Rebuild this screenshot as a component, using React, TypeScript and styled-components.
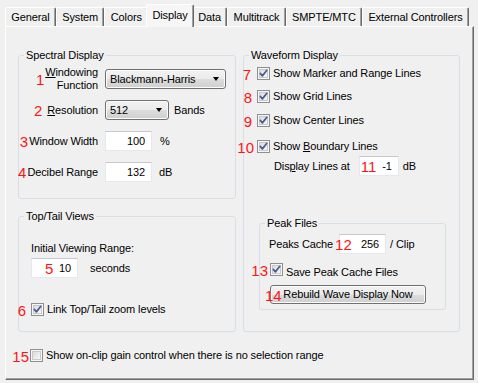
import React from 'react';
import styled, { createGlobalStyle } from 'styled-components';

const GlobalStyle = createGlobalStyle`
  html, body {
    margin: 0;
    padding: 0;
    background: #f0f0f0;
  }

  body {
    font-family: 'Liberation Sans', Arial, sans-serif;
    font-size: 11px;
    letter-spacing: -0.12px;
    color: #000;
  }
`;

const Window = styled.div`
  width: 478px;
  height: 383px;
  box-sizing: border-box;
  padding: 4px 4px 3px 5px;
  display: flex;
  flex-direction: column;
  background: #f0f0f0;
`;

const TabStrip = styled.div`
  display: flex;
  align-items: flex-end;
  height: 22px;
  position: relative;
  z-index: 1;
`;

const Tab = styled.div<{ $active?: boolean }>`
  position: relative;
  z-index: ${(p) => (p.$active ? 2 : 1)};
  box-sizing: border-box;
  height: ${(p) => (p.$active ? 23 : 19)}px;
  margin: ${(p) => (p.$active ? '0 -2px -1px' : '0')};
  padding: 0 5.3px ${(p) => (p.$active ? 2 : 0)}px;
  display: flex;
  align-items: center;
  white-space: nowrap;
  background: ${(p) => (p.$active ? '#f6f6f6' : '#f0f0f0')};
  border: 1px solid #fff;
  border-bottom: none;
  border-right-color: #696969;
  border-radius: 2px 2px 0 0;
  box-shadow: inset -1px 0 #a0a0a0;
`;

const Panel = styled.div`
  flex: 1;
  box-sizing: border-box;
  padding: 28px 13px 0 12px;
  border: 1px solid #fff;
  border-right-color: #696969;
  border-bottom-color: #696969;
  box-shadow: inset -1px -1px #a0a0a0;
  display: flex;
  flex-direction: column;
`;

const Columns = styled.div`
  display: flex;
  gap: 7px;
`;

const Column = styled.div<{ $w: number }>`
  width: ${(p) => p.$w}px;
  display: flex;
  flex-direction: column;
  gap: 17px;
`;

const Group = styled.div<{ $h: number }>`
  position: relative;
  box-sizing: border-box;
  height: ${(p) => p.$h}px;
  border: 1px solid #d5dfe5;
  border-radius: 3px;
`;

const GroupTitle = styled.span`
  position: absolute;
  top: -7px;
  left: 5px;
  padding: 0 2px;
  line-height: 13px;
  background: #f0f0f0;
`;

const markFont = `
  font-family: 'Liberation Sans', Arial, sans-serif;
  font-size: 15px;
  line-height: 15px;
  letter-spacing: 0;
  color: #ff1414;
  white-space: nowrap;
`;

// red call-out numbers drawn over the dialog
const Note = styled.span<{ $left?: number; $right?: number }>`
  ${markFont}
  position: absolute;
  top: 50%;
  transform: translateY(-50%);
  ${(p) => (p.$left !== undefined ? `left: ${p.$left}px;` : '')}
  ${(p) => (p.$right !== undefined ? `right: calc(100% + ${p.$right}px);` : '')}
  pointer-events: none;
`;

const Mark = styled.span<{ $gap: number }>`
  ${markFont}
  margin-right: ${(p) => p.$gap}px;
`;

const U = styled.span`
  text-decoration: underline;
`;

const FormGrid = styled.div`
  display: grid;
  grid-template-columns: 79px auto;
  grid-template-rows: repeat(4, 20px);
  column-gap: 7px;
  row-gap: 11px;
  padding-top: 13px;
  align-items: center;
`;

const LabelCell = styled.div`
  display: flex;
  justify-content: flex-end;
  align-items: center;
  white-space: nowrap;
`;

const TwoLine = styled.div`
  text-align: right;
  line-height: 13px;
`;

const ControlCell = styled.div<{ $gap?: number }>`
  display: flex;
  align-items: center;
  gap: ${(p) => p.$gap || 0}px;
`;

const Combo = styled.div<{ $w: number }>`
  box-sizing: border-box;
  width: ${(p) => p.$w}px;
  height: 20px;
  padding: 0 6px 0 4px;
  display: flex;
  align-items: center;
  justify-content: space-between;
  border: 1px solid #707070;
  border-radius: 3px;
  background: linear-gradient(#f2f2f2 0%, #ebebeb 50%, #dddddd 50%, #cfcfcf 100%);
  box-shadow: inset 0 0 0 1px #fcfcfc;
`;

const Arrow = styled.span`
  width: 0;
  height: 0;
  border-left: 3.5px solid transparent;
  border-right: 3.5px solid transparent;
  border-top: 4px solid #000;
`;

const FieldWrap = styled.span<{ $ml?: number }>`
  position: relative;
  display: inline-flex;
  margin-left: ${(p) => p.$ml || 0}px;
`;

const Field = styled.input<{ $w: number }>`
  box-sizing: border-box;
  width: ${(p) => p.$w}px;
  height: 20px;
  margin: 0;
  padding: 0 6px 0 2px;
  font: inherit;
  letter-spacing: inherit;
  color: #000;
  text-align: right;
  background: #fff;
  border: 1px solid #e3e9ef;
  border-top-color: #c5c9cf;
  outline: none;
`;

const Inset = styled.div<{ $top: number; $left: number }>`
  padding: ${(p) => p.$top}px 0 0 ${(p) => p.$left}px;
  display: flex;
  flex-direction: column;
  align-items: flex-start;
`;

const Line = styled.div<{ $mt?: number; $gap?: number }>`
  display: flex;
  align-items: center;
  gap: ${(p) => p.$gap || 0}px;
  margin-top: ${(p) => p.$mt || 0}px;
  line-height: 13px;
  white-space: nowrap;
`;

const LineLabel = styled.span<{ $ml?: number; $mr?: number }>`
  margin-left: ${(p) => p.$ml || 0}px;
  margin-right: ${(p) => p.$mr || 0}px;
`;

const BoxWrap = styled.span`
  position: relative;
  display: inline-flex;
`;

const CheckLabel = styled.span`
  margin-left: 3px;
  line-height: 13px;
`;

const PushButton = styled.div`
  position: relative;
  box-sizing: border-box;
  width: 156px;
  height: 19px;
  display: flex;
  align-items: center;
  justify-content: center;
  border: 1px solid #707070;
  border-radius: 3px;
  background: linear-gradient(#f2f2f2 0%, #ebebeb 50%, #dddddd 50%, #cfcfcf 100%);
  box-shadow: inset 0 0 0 1px #fcfcfc;
`;

const SubGroup = styled(Group)`
  margin: 47px 0 0 15px;
  width: 187px;
`;

const BottomRow = styled(Line)`
  margin: 17px 0 0 12px;
`;

const CheckBox = ({ checked }: { checked: boolean }) => (
  <svg width="13" height="13" viewBox="0 0 13 13">
    <defs>
      <linearGradient id="cbFill" x1="0" y1="0" x2="1" y2="1">
        <stop offset="0" stopColor="#d8d8d8" />
        <stop offset="1" stopColor="#fbfbfb" />
      </linearGradient>
    </defs>
    <rect x="0.5" y="0.5" width="12" height="12" fill="#f6f6f6" stroke="#8e8f8f" />
    <rect x="2.5" y="2.5" width="8" height="8" fill="url(#cbFill)" stroke="#c9c9c9" />
    {checked && (
      <path
        d="M3.3 6.4 L5.4 8.9 L9.8 3.3"
        fill="none"
        stroke="#4a5c94"
        strokeWidth="1.7"
        strokeLinecap="round"
        strokeLinejoin="round"
      />
    )}
  </svg>
);

const Check = ({
  n,
  gap,
  checked,
  children,
}: {
  n: string;
  gap: number;
  checked: boolean;
  children: React.ReactNode;
}) => (
  <>
    <BoxWrap>
      <Note $right={gap}>{n}</Note>
      <CheckBox checked={checked} />
    </BoxWrap>
    <CheckLabel>{children}</CheckLabel>
  </>
);

const tabs = [
  'General',
  'System',
  'Colors',
  'Display',
  'Data',
  'Multitrack',
  'SMPTE/MTC',
  'External Controllers',
];

export default function App() {
  return (
    <>
      <GlobalStyle />
      <Window>
        <TabStrip>
          {tabs.map((t) => (
            <Tab key={t} $active={t === 'Display'}>
              {t}
            </Tab>
          ))}
        </TabStrip>

        <Panel>
          <Columns>
            <Column $w={218}>
              <Group $h={144}>
                <GroupTitle>Spectral Display</GroupTitle>
                <FormGrid>
                  <LabelCell>
                    <Mark $gap={1}>1</Mark>
                    <TwoLine>
                      <U>W</U>indowing
                      <br />
                      Function
                    </TwoLine>
                  </LabelCell>
                  <ControlCell>
                    <Combo $w={121}>
                      Blackmann-Harris
                      <Arrow />
                    </Combo>
                  </ControlCell>

                  <LabelCell>
                    <Mark $gap={5}>2</Mark>
                    <span>
                      <U>R</U>esolution
                    </span>
                  </LabelCell>
                  <ControlCell $gap={5}>
                    <Combo $w={64}>
                      512
                      <Arrow />
                    </Combo>
                    Bands
                  </ControlCell>

                  <LabelCell>
                    <Mark $gap={1}>3</Mark>
                    <span>Window Width</span>
                  </LabelCell>
                  <ControlCell $gap={8}>
                    <Field $w={47} readOnly value="100" />%
                  </ControlCell>

                  <LabelCell>
                    <Mark $gap={1}>4</Mark>
                    <span>Decibel Range</span>
                  </LabelCell>
                  <ControlCell $gap={7}>
                    <Field $w={47} readOnly value="132" />
                    dB
                  </ControlCell>
                </FormGrid>
              </Group>

              <Group $h={116}>
                <GroupTitle>Top/Tail Views</GroupTitle>
                <Inset $top={25} $left={12}>
                  <Line>Initial Viewing Range:</Line>
                  <Line $mt={3} $gap={12}>
                    <FieldWrap>
                      <Field $w={47} readOnly value="10" />
                      <Note $left={14}>5</Note>
                    </FieldWrap>
                    seconds
                  </Line>
                  <Line $mt={25}>
                    <Check n="6" gap={5} checked>
                      Link Top/Tail zoom levels
                    </Check>
                  </Line>
                </Inset>
              </Group>
            </Column>

            <Column $w={217}>
              <Group $h={277}>
                <GroupTitle>Waveform Display</GroupTitle>
                <Inset $top={11} $left={13}>
                  <Line>
                    <Check n="7" gap={6} checked>
                      Show Marker and Range Lines
                    </Check>
                  </Line>
                  <Line $mt={10}>
                    <Check n="8" gap={5} checked>
                      Show Grid Lines
                    </Check>
                  </Line>
                  <Line $mt={11}>
                    <Check n="9" gap={5} checked>
                      Show Center Lines
                    </Check>
                  </Line>
                  <Line $mt={13}>
                    <Check n="10" gap={3} checked>
                      Show <U>B</U>oundary Lines
                    </Check>
                  </Line>
                  <Line $mt={3} $gap={4}>
                    <LineLabel $ml={17} $mr={5}>
                      Dis<U>p</U>lay Lines at
                    </LineLabel>
                    <FieldWrap>
                      <Field $w={40} readOnly value="-1" />
                      <Note $left={2}>11</Note>
                    </FieldWrap>
                    dB
                  </Line>
                </Inset>

                <SubGroup $h={87}>
                  <GroupTitle>Peak Files</GroupTitle>
                  <Inset $top={10} $left={9}>
                    <Line $gap={4}>
                      <span>Peaks Cache</span>
                      <FieldWrap $ml={2}>
                        <Field $w={47} readOnly value="256" />
                        <Note $left={-4}>12</Note>
                      </FieldWrap>
                      / Clip
                    </Line>
                    <Line $mt={9}>
                      <LineLabel $ml={1}>
                        <Check n="13" gap={2} checked>
                          Save Peak Cache Files
                        </Check>
                      </LineLabel>
                    </Line>
                    <Line $mt={6}>
                      <LineLabel $ml={1}>
                        <PushButton>
                          <Note $left={-6}>14</Note>
                          Rebuild Wave Display Now
                        </PushButton>
                      </LineLabel>
                    </Line>
                  </Inset>
                </SubGroup>
              </Group>
            </Column>
          </Columns>

          <BottomRow>
            <Check n="15" gap={1} checked={false}>
              Show on-clip gain control when there is no selection range
            </Check>
          </BottomRow>
        </Panel>
      </Window>
    </>
  );
}
